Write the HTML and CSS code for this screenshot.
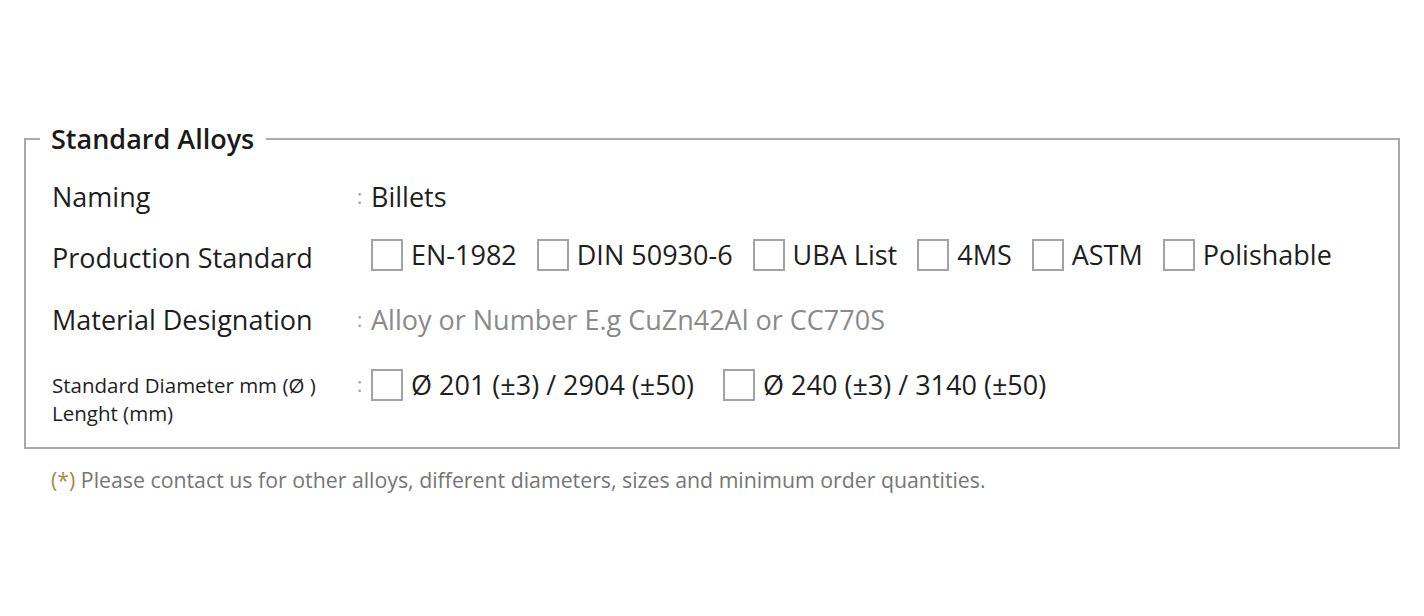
FILE: index.html
```html
<!DOCTYPE html>
<html lang="en">
<head>
<meta charset="utf-8">
<title>Standard Alloys</title>
<link rel="stylesheet" href="styles.css">
</head>
<body>
<main class="page">
  <fieldset class="alloys">
    <legend class="alloys-title">Standard Alloys</legend>

    <div class="row row-naming">
      <div class="row-label">Naming</div>
      <div class="row-colon">:</div>
      <div class="row-value">Billets</div>
    </div>

    <div class="row row-standard">
      <div class="row-label label-low">Production Standard</div>
      <div class="row-colon"></div>
      <div class="row-value options">
        <label class="opt"><span class="box"></span><span class="opt-text">EN-1982</span></label>
        <label class="opt"><span class="box"></span><span class="opt-text">DIN 50930-6</span></label>
        <label class="opt"><span class="box"></span><span class="opt-text">UBA List</span></label>
        <label class="opt"><span class="box"></span><span class="opt-text">4MS</span></label>
        <label class="opt"><span class="box"></span><span class="opt-text">ASTM</span></label>
        <label class="opt"><span class="box"></span><span class="opt-text">Polishable</span></label>
      </div>
    </div>

    <div class="row row-material">
      <div class="row-label">Material Designation</div>
      <div class="row-colon">:</div>
      <div class="row-value placeholder">Alloy or Number E.g CuZn42Al or CC770S</div>
    </div>

    <div class="row row-diameter">
      <div class="row-label small-label">Standard Diameter mm (Ø )<br>Lenght (mm)</div>
      <div class="row-colon colon-top">:</div>
      <div class="row-value options options-wide">
        <label class="opt"><span class="box"></span><span class="opt-text">Ø 201 (±3) / 2904 (±50)</span></label>
        <label class="opt"><span class="box"></span><span class="opt-text">Ø 240 (±3) / 3140 (±50)</span></label>
      </div>
    </div>
  </fieldset>

  <p class="note"><span class="note-mark">(*)</span> Please contact us for other alloys, different diameters, sizes and minimum order quantities.</p>
</main>
</body>
</html>
```

FILE: styles.css
```css
* { box-sizing: border-box; }

html, body {
  margin: 0;
  padding: 0;
  background: #ffffff;
}

body {
  font-family: "Open Sans", "Liberation Sans", sans-serif;
  color: #1e1e1e;
}

.page {
  padding: 121px 0 0 24px;
  width: 1400px;
}

.alloys {
  margin: 0;
  border: 2px solid #a9a9a9;
  padding: 20px 26px 18px 26px;
  min-width: 0;
}

.alloys-title {
  font-size: 27px;
  font-weight: 600;
  line-height: 36px;
  padding: 0 12px 0 11px;
  margin-left: -12px;
  color: #1a1a1a;
}

.row {
  display: grid;
  grid-template-columns: 303px 16px 1fr;
  align-items: center;
  font-size: 27px;
  line-height: 40px;
}

.row-naming { height: 40px; }
.row-standard { margin-top: 15px; }
.row-material { margin-top: 22px; height: 40px; }
.row-diameter {
  margin-top: 29px;
  align-items: start;
  height: 60px;
}

.label-low { padding-top: 6px; }

.row-colon {
  font-size: 20px;
  color: #9a9a9a;
  padding-left: 2px;
}

.colon-top {
  line-height: 32px;
}

.row-value { color: #1e1e1e; }

.placeholder { color: #8a8a8a; }

.small-label {
  font-size: 20.5px;
  line-height: 28px;
  padding-top: 2px;
}

.options {
  display: flex;
  align-items: center;
  gap: 20px;
}

.options-wide { gap: 29px; }

.opt {
  display: flex;
  align-items: center;
  gap: 8px;
  line-height: 32px;
}

.box {
  width: 32px;
  height: 32px;
  border: 2px solid #a3a3a3;
  background: #fff;
  flex: none;
}

.note {
  margin: 17px 0 0 27px;
  font-size: 21.3px;
  line-height: 28px;
  color: #767676;
}

.note-mark { color: #a8893a; }
```
